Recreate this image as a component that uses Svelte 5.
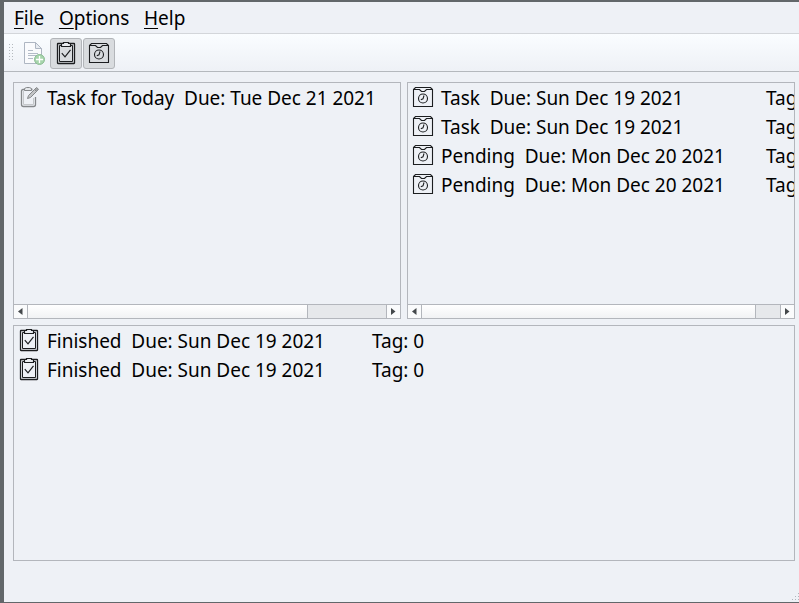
<script>
  const menus = ['File', 'Options', 'Help'];
  const today = [{ title: 'Task for Today', due: 'Tue Dec 21 2021', tag: '' }];
  const pending = [
    { title: 'Task', due: 'Sun Dec 19 2021', tag: 'Tag: 0' },
    { title: 'Task', due: 'Sun Dec 19 2021', tag: 'Tag: 0' },
    { title: 'Pending', due: 'Mon Dec 20 2021', tag: 'Tag: 0' },
    { title: 'Pending', due: 'Mon Dec 20 2021', tag: 'Tag: 0' }
  ];
  const finished = [
    { title: 'Finished', due: 'Sun Dec 19 2021', tag: 'Tag: 0' },
    { title: 'Finished', due: 'Sun Dec 19 2021', tag: 'Tag: 0' }
  ];
</script>

{#snippet checkIcon()}
  <svg class="icon" width="22" height="24" viewBox="0 0 22 24" fill="none" stroke="#1c1e20">
    <rect x="2.500" y="2.500" width="17" height="20" rx=".5" stroke-width="1.300" />
    <path d="M6 4.500H4.500V20.500H17.500V4.500H16" stroke-width="1" />
    <path d="M6.500 5.500V2.500H8.500V1.500H13.500V2.500H15.500V5.500z" fill="#e9ecf0" stroke-width="1.200" />
    <path d="M6.800 12.200L10 15.800L15.500 8.800" stroke-width="1.200" />
  </svg>
{/snippet}

{#snippet boxIcon()}
  <svg class="icon" width="22" height="24" viewBox="0 0 22 24" fill="none" stroke="#1c1e20">
    <path d="M1.500 4.500L3.500 2.500H18.500L20.500 4.500V21.500H1.500z" stroke-width="1.100" />
    <path d="M1.500 4.500H7.500L9.500 6.500H12.500L14.500 4.500H20.500" stroke-width="1.100" />
    <circle cx="11" cy="13.500" r="4.500" stroke-width="1.100" />
    <path d="M12 10.500L11 13.800L8.800 14.800" stroke-width="1.100" />
  </svg>
{/snippet}

{#snippet editIcon()}
  <svg class="icon" width="22" height="24" viewBox="0 0 22 24" fill="none" stroke="#85888b">
    <path d="M14.500 4.500H5Q3.500 4.500 3.500 6V19.500Q3.500 21.500 5.500 21.500H15.500Q17.500 21.500 17.500 19.500V12" stroke-width="1.300" />
    <path d="M5.500 6V19.500H15.500V13" stroke="#c4c7ca" />
    <path d="M6.500 5.500V3.500L8.500 2.500H11.500L13.500 3.500V5.500z" fill="#e4e7ea" />
    <path d="M9.500 13.500L10.500 10.500L16.500 4.500L18.500 6.500L12.500 12.500z" fill="#c3c5c7" />
    <path d="M16.500 4.500L18.500 2.500L20.500 4.200L18.500 6.500z" fill="#a5a8aa" />
  </svg>
{/snippet}

{#snippet list(items, icon)}
  <ul>
    {#each items as item}
      <li>
        {@render icon()}
        <span class="label">{item.title}&nbsp; Due: {item.due}</span>
        {#if item.tag}<span class="tag">{item.tag}</span>{/if}
      </li>
    {/each}
  </ul>
{/snippet}

{#snippet scrollbar(groove)}
  <div class="scrollbar">
    <span class="step"><svg width="13" height="13"><path d="M8.500 3V10L4 6.500z" fill="#44484b" /></svg></span>
    <span class="thumb"></span>
    <span class="groove" style="width: {groove}px"></span>
    <span class="step"><svg width="13" height="13"><path d="M4 3V10L8.500 6.500z" fill="#44484b" /></svg></span>
  </div>
{/snippet}

<div class="window">
  <nav>
    {#each menus as menu}
      <span><u>{menu[0]}</u>{menu.slice(1)}</span>
    {/each}
  </nav>
  <div class="toolbar">
    <svg class="handle" width="6" height="20" fill="#b5babe">
      {#each [0, 3, 6, 9, 12, 15] as y}
        <rect x="0" {y} width="1" height="1" /><rect x="3" {y} width="1" height="1" />
      {/each}
    </svg>
    <button class="new" aria-label="New task">
      <svg width="24" height="24" viewBox="0 0 24 24" fill="none">
        <path d="M2.500 1.500H13.500L19.500 7.500V22.500H2.500z" fill="#fafbfd" stroke="#aeb6c2" />
        <path d="M13.500 1.500V7.500H19.500z" fill="#e8ecf1" stroke="#aeb6c2" />
        <path d="M6 9.500H11M6 12.500H16M6 14.500H14M6 17.500H11" stroke="#b4bcc8" />
        <circle cx="17.500" cy="18.500" r="5" fill="#a7d5ac" stroke="#8dbd94" />
        <path d="M17.500 15V22M14 18.500H21" stroke="#fff" stroke-width="1.300" />
      </svg>
    </button>
    <button class="pressed" aria-label="Show finished">{@render checkIcon()}</button>
    <button class="pressed" aria-label="Show pending">{@render boxIcon()}</button>
  </div>
  <main>
    <div class="top">
      <section>{@render list(today, editIcon)}{@render scrollbar(78)}</section>
      <section class="pending">{@render list(pending, boxIcon)}{@render scrollbar(24)}</section>
    </div>
    <section class="finished">{@render list(finished, checkIcon)}</section>
  </main>
  <svg class="grip" width="8" height="9" fill="#b0b4bb">
    <path d="M7 0h1v1h-1zM4 3h1v1h-1zM7 3h1v1h-1zM1 6h1v1h-1zM4 6h1v1h-1zM7 6h1v1h-1z" />
  </svg>
</div>

<style>
  :global(body) { margin: 0; overflow: hidden; }
  .window {
    position: relative; box-sizing: border-box; width: 799px; height: 603px;
    display: flex; flex-direction: column; background: #eef1f6; color: #000;
    border: solid #62676a; border-width: 2px 0 1px 3px;
    padding-left: 1px; box-shadow: inset 1px 0 #62676a; overflow: hidden;
    font: 19px/29px 'Noto Sans', sans-serif; letter-spacing: -.02px;
  }
  .window::before {
    content: ''; position: absolute; left: -3px; top: -2px; width: 1px; height: 603px;
    background: #8d9193;
  }
  nav { display: flex; height: 31px; padding-left: 10px; gap: 14.600px; border-bottom: 1px solid #d3d6da; }
  nav span { line-height: 32px; }
  u { text-decoration-thickness: 1px; text-underline-offset: 3px; }
  .toolbar {
    display: flex; align-items: center; box-sizing: border-box; height: 38px; padding-left: 5px;
    border-bottom: 1px solid #b4b8bd; background: linear-gradient(#fafdff, #eef1f6);
  }
  .handle { margin-top: 3px; margin-right: 6px; }
  button {
    display: flex; align-items: center; justify-content: center; box-sizing: border-box;
    width: 32px; height: 31px; padding: 0 0 1px; margin: 2px 1px 0 0;
    border: 1px solid transparent; border-radius: 3px; background: none;
  }
  .new { width: 28px; margin-right: 2px; margin-left: -1px; }
  .pressed { border-color: #b2b5b9; background: #d9dcdf; }
  main { display: flex; flex-direction: column; gap: 6px; padding: 10px 4px 0 9px; }
  .top { display: flex; gap: 6px; }
  section {
    display: flex; flex-direction: column; box-sizing: border-box; flex: 0 0 388px;
    height: 237px; border: 1px solid #b3b6bc; overflow: hidden;
  }
  .finished { flex: none; height: 236px; }
  ul { list-style: none; margin: 0; padding: 1px 0 0 4px; flex: 1; overflow: hidden; }
  li { display: flex; align-items: center; height: 29px; white-space: pre; }
  .icon { flex: none; display: block; }
  li .icon { margin-right: 7px; margin-top: -3px; }
  .label { flex: none; width: 325px; }
  .tag { flex: none; }
  .scrollbar { display: flex; height: 13px; border-top: 1px solid #b3b6bc; background: #fafbfc; }
  .step { width: 13px; display: flex; }
  .thumb {
    flex: 1; border: solid #b3b6bc; border-width: 0 1px;
    background: linear-gradient(#fff, #f1f2f4);
  }
  .groove { background: #e6e8eb; border-right: 1px solid #b3b6bc; }
  .grip { position: absolute; right: 0; bottom: 0; }
</style>
